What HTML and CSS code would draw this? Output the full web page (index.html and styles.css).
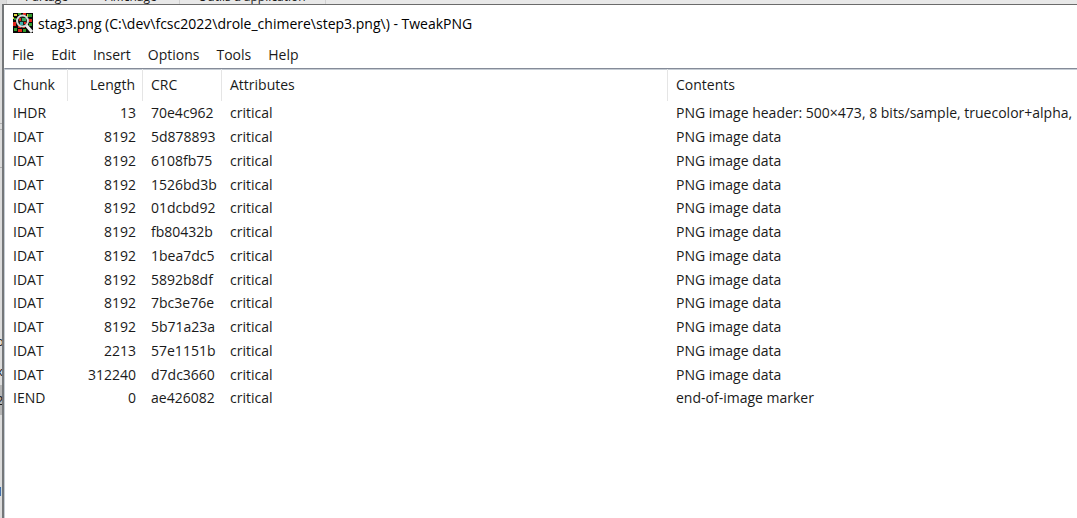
FILE: index.html
```html
<!DOCTYPE html>
<html lang="en">
<head>
<meta charset="utf-8">
<title>TweakPNG</title>
<link rel="stylesheet" href="styles.css">
</head>
<body>
<div class="desktop">
  <div class="ribbon"><span class="tab share">Partage</span><span class="tab view">Affichage</span><span class="tab tools">Outils d'application</span></div>
  <div class="behind"><span class="rule rule-a"></span><span class="rule rule-b"></span><span class="peek peek-a">o</span><span class="peek peek-b">x</span><span class="peek peek-c">2</span><span class="peek peek-d">1</span></div>
  <main class="window">
    <header class="titlebar">
      <svg class="logo" viewBox="0 0 20 20" aria-hidden="true">
        <rect width="20" height="20" fill="#080806"/>
        <path fill="#e0d840" d="M1 1h3v2H1zM0 4h1v2H0zM14 1h1v3h-1z"/>
        <path fill="#2f9a2a" d="M5 0h3v2H5zM15 1h4v3h-4zM1 5h2v2H1zM1 15h3v3H1zM10 16h3v3h-3zM16 10h3v3h-3z"/>
        <path fill="#e3261b" d="M10 0h3v2h-3zM16 6h3v3h-3zM0 9h3v4H0zM5 16h4v3H5zM5 13h3v2H5zM10 14h2v1h-2z"/>
        <path d="M13 12l6 7" stroke="#f2f2f2" stroke-width="3"/>
        <circle cx="9.500" cy="8" r="5.500" fill="#172018" stroke="#d6dedc" stroke-width="2"/>
        <path fill="#e02a20" d="M6 5h2v3H6zM11 9h2v2h-2z"/>
        <path fill="#37a75a" d="M9 5h4v3H9z"/>
        <path fill="#3bb0ad" d="M7 9h3v3H7z"/>
      </svg>
      <h1 class="title">stag3.png (C:\dev\fcsc2022\drole_chimere\step3.png\) - TweakPNG</h1>
    </header>
    <nav class="menu">
      <button type="button">File</button><button type="button">Edit</button><button type="button">Insert</button><button type="button">Options</button><button type="button">Tools</button><button type="button">Help</button>
    </nav>
    <div class="list">
    <table class="chunks">
      <colgroup><col class="c-chunk"><col class="c-length"><col class="c-crc"><col class="c-attr"><col></colgroup>
      <thead><tr><th>Chunk</th><th class="num">Length</th><th>CRC</th><th>Attributes</th><th>Contents</th></tr></thead>
      <tbody>
        <tr><td>IHDR</td><td class="num">13</td><td>70e4c962</td><td>critical</td><td>PNG image header: 500×473, 8 bits/sample, truecolor+alpha,</td></tr>
        <tr><td>IDAT</td><td class="num">8192</td><td>5d878893</td><td>critical</td><td>PNG image data</td></tr>
        <tr><td>IDAT</td><td class="num">8192</td><td>6108fb75</td><td>critical</td><td>PNG image data</td></tr>
        <tr><td>IDAT</td><td class="num">8192</td><td>1526bd3b</td><td>critical</td><td>PNG image data</td></tr>
        <tr><td>IDAT</td><td class="num">8192</td><td>01dcbd92</td><td>critical</td><td>PNG image data</td></tr>
        <tr><td>IDAT</td><td class="num">8192</td><td>fb80432b</td><td>critical</td><td>PNG image data</td></tr>
        <tr><td>IDAT</td><td class="num">8192</td><td>1bea7dc5</td><td>critical</td><td>PNG image data</td></tr>
        <tr><td>IDAT</td><td class="num">8192</td><td>5892b8df</td><td>critical</td><td>PNG image data</td></tr>
        <tr><td>IDAT</td><td class="num">8192</td><td>7bc3e76e</td><td>critical</td><td>PNG image data</td></tr>
        <tr><td>IDAT</td><td class="num">8192</td><td>5b71a23a</td><td>critical</td><td>PNG image data</td></tr>
        <tr><td>IDAT</td><td class="num">2213</td><td>57e1151b</td><td>critical</td><td>PNG image data</td></tr>
        <tr><td>IDAT</td><td class="num">312240</td><td>d7dc3660</td><td>critical</td><td>PNG image data</td></tr>
        <tr><td>IEND</td><td class="num">0</td><td>ae426082</td><td>critical</td><td>end-of-image marker</td></tr>
      </tbody>
    </table>
    </div>
  </main>
</div>
</body>
</html>
```
FILE: styles.css
```css
* { box-sizing: border-box; }
body {
  margin: 0;
  font-family: "Open Sans", "Noto Sans", sans-serif;
  font-size: 14px;
  color: #1a1a1a;
}
.desktop {
  position: relative;
  min-height: 100vh;
  padding: 4px 0 0 2px;
  overflow: hidden;
  background: #dcdcdc;
}
.ribbon {
  position: absolute;
  left: 6px;
  top: -12px;
  display: flex;
  height: 18px;
  line-height: 18px;
  font-size: 12px;
  background: #e8e8e8;
  width: 100%;
  border-left: 1px solid #d0d0d0;
}
.tab { padding-left: 18px; }
.share { width: 80px; }
.view { width: 93px; border-right: 1px solid #d0d0d0; }
.tools { width: 146px; border-right: 1px solid #d0d0d0; }
.rule {
  position: absolute;
  left: 0;
  width: 2px;
  border-top: 1px solid #b0b0b0;
}
.rule-a { top: 123px; height: 7px; border-bottom: 1px solid #b0b0b0; }
.rule-b { top: 167px; }
.peek {
  position: absolute;
  left: -4px;
  width: 6px;
  line-height: 24px;
  font-size: 13px;
}
.peek-a { top: 329px; }
.peek-b { top: 359px; }
.peek-c { top: 385px; line-height: 30px; background: #b5b5b5; }
.peek-d { top: 479px; }
.window {
  position: relative;
  display: flex;
  flex-direction: column;
  min-height: calc(100vh - 4px);
  background: #fff;
  border-top: 1px solid #6b6b6b;
  border-left: 2px solid #747779;
}
.titlebar {
  display: flex;
  align-items: center;
  gap: 5px;
  height: 36px;
  padding-left: 9px;
}
.logo { width: 20px; height: 20px; }
.title { margin: 0; font-size: 14px; font-weight: 400; color: #000; white-space: nowrap; }
.menu { display: flex; height: 27px; padding-left: 8px; gap: 17px; }
.menu button {
  padding: 0;
  border: 0;
  background: none;
  font: inherit;
  color: inherit;
  line-height: 26px;
}
.list {
  flex: 1;
  border-top: 1px solid #858b98;
  border-left: 1px solid #c5ccd4;
  box-shadow: inset 0 1px #c5ccd4;
}
.chunks {
  width: 100%;
  table-layout: fixed;
  border-spacing: 0;
}
.c-chunk { width: 63px; }
.c-length { width: 75px; }
.c-crc { width: 79px; }
.c-attr { width: 446px; }
.chunks th, .chunks td {
  padding: 0 7px 0 8px;
  height: 24px;
  line-height: 20px;
  font-weight: 400;
  text-align: left;
  white-space: nowrap;
}
.chunks tr:nth-child(4n) td { height: 23px; }
.chunks th { height: 32px; border-right: 1px solid #e5e5e5; }
.chunks th:last-child { border-right: 0; }
.chunks td:last-child { padding-right: 0; }
.chunks .num { text-align: right; }
```
